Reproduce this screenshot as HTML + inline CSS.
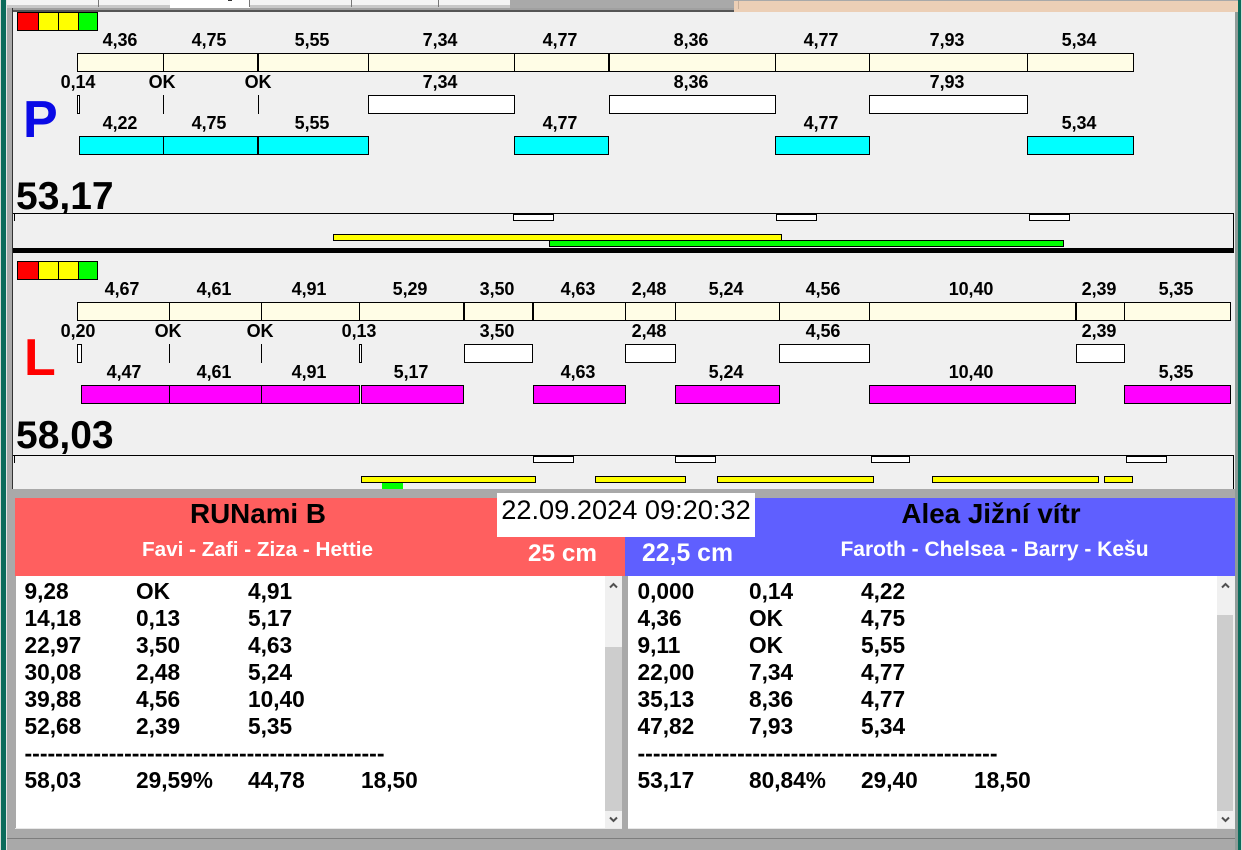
<!DOCTYPE html>
<html><head><meta charset="utf-8">
<style>
html,body{margin:0;padding:0;width:1242px;height:850px;overflow:hidden;background:#a9a9a9}
body{position:relative;font-family:"Liberation Sans",Arial,sans-serif;color:#000}
div{position:absolute;box-sizing:border-box}
svg{position:absolute}
.b{border:1px solid #000}
.a{height:19px;top:53px;background:#fffde6}
.c{height:19px;top:95px;background:#fff}
.d{height:19px;top:136px;background:#00ffff}
.e{height:19px;top:302px;background:#fffde6}
.f{height:19px;top:344px;background:#fff}
.g{height:19px;top:385px;background:#ff00ff}
.tk{width:1px;background:#000;height:19px}
.t{width:100px;text-align:center;font-weight:bold;font-size:18px;line-height:20px;height:20px;white-space:nowrap;letter-spacing:-.1px}
.big{font-weight:bold;font-size:39px;line-height:44px;left:16px;white-space:nowrap}
.w{background:#fff;height:7px}
.y{background:#ffff00;height:7px}
.gr{background:#00ff00;border:1px solid #000}
.col{font-weight:bold;font-size:22.7px;line-height:27px;top:578px;white-space:pre}
.col span{font-size:23px}
.sb{background:#f0f0f0;top:576px;height:252px;width:17px}
.th{background:#cdcdcd;width:17px}
.h{text-align:center;white-space:nowrap;font-weight:bold}
</style></head><body>

<!-- window frame -->
<div style="left:0;top:0;width:1px;height:850px;background:#d8dcd8"></div>
<div style="left:1px;top:0;width:5px;height:850px;background:#0b6b5b"></div>
<div style="left:6px;top:0;width:1px;height:850px;background:#e6e6e6"></div>
<div style="left:7px;top:0;width:5px;height:850px;background:#a9a9a9"></div>
<div style="left:1238px;top:0;width:3px;height:850px;background:#0b6b5b"></div>
<div style="left:1241px;top:0;width:1px;height:850px;background:#d8dcd8"></div>
<div style="left:1235px;top:12px;width:3px;height:838px;background:#8f9b98"></div>

<!-- top tabs -->
<div style="left:7px;top:0;width:503px;height:8px;background:#f4f4f4"></div>
<div style="left:7px;top:5px;width:503px;height:3px;background:#c8c8c8"></div>
<div style="left:170px;top:0;width:80px;height:8px;background:#fff"></div>
<div style="left:98px;top:0;width:1px;height:7px;background:#777"></div>
<div style="left:249px;top:0;width:1px;height:7px;background:#777"></div>
<div style="left:351px;top:0;width:1px;height:7px;background:#777"></div>
<div style="left:438px;top:0;width:1px;height:7px;background:#777"></div>
<div style="left:228px;top:0;width:4px;height:1px;background:#333"></div>
<div style="left:510px;top:1px;width:224px;height:7px;background:#a9a9a9"></div>
<div style="left:12px;top:8px;width:722px;height:2px;background:#a0a0a0"></div>
<div style="left:12px;top:10px;width:722px;height:2px;background:#555"></div>
<div style="left:734px;top:1px;width:504px;height:11px;background:#eccfb6"></div>
<div style="left:738px;top:1px;width:1px;height:8px;background:#c9b09a"></div>

<!-- panel -->
<div style="left:12px;top:8px;width:1px;height:481px;background:#333"></div>
<div style="left:13px;top:12px;width:1222px;height:477px;background:#f0f0f0"></div>

<!-- P semaphore -->
<div class="b" style="left:17px;top:12px;width:22px;height:19px;background:#ff0000"></div>
<div class="b" style="left:38px;top:12px;width:21px;height:19px;background:#ffff00"></div>
<div class="b" style="left:58px;top:12px;width:21px;height:19px;background:#ffff00"></div>
<div class="b" style="left:78px;top:12px;width:20px;height:19px;background:#00ff00"></div>

<!-- P row 1 -->
<div class="b a" style="left:77px;width:87px"></div>
<div class="b a" style="left:163px;width:95px"></div>
<div class="b a" style="left:258px;width:111px"></div>
<div class="b a" style="left:368px;width:147px"></div>
<div class="b a" style="left:514px;width:95px"></div>
<div class="b a" style="left:609px;width:167px"></div>
<div class="b a" style="left:775px;width:95px"></div>
<div class="b a" style="left:869px;width:159px"></div>
<div class="b a" style="left:1027px;width:107px"></div>

<!-- P row 2 -->
<div class="b c" style="left:77px;width:3px"></div>
<div class="tk" style="left:163px;top:95px"></div>
<div class="tk" style="left:258px;top:95px"></div>
<div class="b c" style="left:368px;width:147px"></div>
<div class="b c" style="left:609px;width:167px"></div>
<div class="b c" style="left:869px;width:159px"></div>

<!-- P row 3 -->
<div class="b d" style="left:79px;width:85px"></div>
<div class="b d" style="left:163px;width:95px"></div>
<div class="b d" style="left:258px;width:111px"></div>
<div class="b d" style="left:514px;width:95px"></div>
<div class="b d" style="left:775px;width:95px"></div>
<div class="b d" style="left:1027px;width:107px"></div>

<!-- P labels -->
<div class="t" style="left:70px;top:30px">4,36</div>
<div class="t" style="left:159px;top:30px">4,75</div>
<div class="t" style="left:262px;top:30px">5,55</div>
<div class="t" style="left:390px;top:30px">7,34</div>
<div class="t" style="left:510px;top:30px">4,77</div>
<div class="t" style="left:641px;top:30px">8,36</div>
<div class="t" style="left:771px;top:30px">4,77</div>
<div class="t" style="left:897px;top:30px">7,93</div>
<div class="t" style="left:1029px;top:30px">5,34</div>

<div class="t" style="left:28px;top:72px">0,14</div>
<div class="t" style="left:112px;top:72px">OK</div>
<div class="t" style="left:208px;top:72px">OK</div>
<div class="t" style="left:390px;top:72px">7,34</div>
<div class="t" style="left:641px;top:72px">8,36</div>
<div class="t" style="left:897px;top:72px">7,93</div>

<div class="t" style="left:70px;top:113px">4,22</div>
<div class="t" style="left:159px;top:113px">4,75</div>
<div class="t" style="left:262px;top:113px">5,55</div>
<div class="t" style="left:510px;top:113px">4,77</div>
<div class="t" style="left:771px;top:113px">4,77</div>
<div class="t" style="left:1029px;top:113px">5,34</div>

<div style="left:23px;top:90px;font-weight:bold;font-size:52px;line-height:60px;color:#0a0ae6">P</div>

<!-- P total, clipped by line -->
<div style="left:13px;top:170px;width:200px;height:43px;overflow:hidden"><div class="big" style="left:3px;top:5px">53,17</div></div>

<!-- P timeline -->
<div style="left:13px;top:213px;width:1221px;height:1px;background:#000"></div>
<div style="left:14px;top:214px;width:1px;height:7px;background:#000"></div>
<div style="left:1233px;top:213px;width:1px;height:35px;background:#000"></div>
<div class="b w" style="left:513px;top:214px;width:41px"></div>
<div class="b w" style="left:776px;top:214px;width:41px"></div>
<div class="b w" style="left:1029px;top:214px;width:41px"></div>
<div class="b y" style="left:333px;top:234px;width:449px"></div>
<div class="gr" style="left:549px;top:240px;width:515px;height:7px"></div>
<div style="left:13px;top:248px;width:1221px;height:5px;background:#000"></div>

<!-- L semaphore -->
<div class="b" style="left:17px;top:261px;width:22px;height:19px;background:#ff0000"></div>
<div class="b" style="left:38px;top:261px;width:21px;height:19px;background:#ffff00"></div>
<div class="b" style="left:58px;top:261px;width:21px;height:19px;background:#ffff00"></div>
<div class="b" style="left:78px;top:261px;width:20px;height:19px;background:#00ff00"></div>

<!-- L row 1 -->
<div class="b e" style="left:77px;width:93px"></div>
<div class="b e" style="left:169px;width:93px"></div>
<div class="b e" style="left:261px;width:99px"></div>
<div class="b e" style="left:359px;width:105px"></div>
<div class="b e" style="left:464px;width:69px"></div>
<div class="b e" style="left:533px;width:93px"></div>
<div class="b e" style="left:625px;width:51px"></div>
<div class="b e" style="left:675px;width:105px"></div>
<div class="b e" style="left:779px;width:91px"></div>
<div class="b e" style="left:869px;width:207px"></div>
<div class="b e" style="left:1076px;width:49px"></div>
<div class="b e" style="left:1124px;width:107px"></div>

<!-- L row 2 -->
<div class="b f" style="left:77px;width:5px"></div>
<div class="tk" style="left:169px;top:344px"></div>
<div class="tk" style="left:261px;top:344px"></div>
<div class="b f" style="left:359px;width:3px"></div>
<div class="b f" style="left:464px;width:69px"></div>
<div class="b f" style="left:625px;width:51px"></div>
<div class="b f" style="left:779px;width:91px"></div>
<div class="b f" style="left:1076px;width:49px"></div>

<!-- L row 3 -->
<div class="b g" style="left:81px;width:89px"></div>
<div class="b g" style="left:169px;width:93px"></div>
<div class="b g" style="left:261px;width:99px"></div>
<div class="b g" style="left:361px;width:103px"></div>
<div class="b g" style="left:533px;width:93px"></div>
<div class="b g" style="left:675px;width:105px"></div>
<div class="b g" style="left:869px;width:207px"></div>
<div class="b g" style="left:1124px;width:107px"></div>

<!-- L labels -->
<div class="t" style="left:72px;top:279px">4,67</div>
<div class="t" style="left:164px;top:279px">4,61</div>
<div class="t" style="left:259px;top:279px">4,91</div>
<div class="t" style="left:360px;top:279px">5,29</div>
<div class="t" style="left:447px;top:279px">3,50</div>
<div class="t" style="left:528px;top:279px">4,63</div>
<div class="t" style="left:599px;top:279px">2,48</div>
<div class="t" style="left:676px;top:279px">5,24</div>
<div class="t" style="left:773px;top:279px">4,56</div>
<div class="t" style="left:921px;top:279px">10,40</div>
<div class="t" style="left:1049px;top:279px">2,39</div>
<div class="t" style="left:1126px;top:279px">5,35</div>

<div class="t" style="left:28px;top:321px">0,20</div>
<div class="t" style="left:118px;top:321px">OK</div>
<div class="t" style="left:210px;top:321px">OK</div>
<div class="t" style="left:309px;top:321px">0,13</div>
<div class="t" style="left:447px;top:321px">3,50</div>
<div class="t" style="left:599px;top:321px">2,48</div>
<div class="t" style="left:773px;top:321px">4,56</div>
<div class="t" style="left:1049px;top:321px">2,39</div>

<div class="t" style="left:74px;top:362px">4,47</div>
<div class="t" style="left:164px;top:362px">4,61</div>
<div class="t" style="left:259px;top:362px">4,91</div>
<div class="t" style="left:361px;top:362px">5,17</div>
<div class="t" style="left:528px;top:362px">4,63</div>
<div class="t" style="left:676px;top:362px">5,24</div>
<div class="t" style="left:921px;top:362px">10,40</div>
<div class="t" style="left:1126px;top:362px">5,35</div>

<div style="left:24px;top:328px;font-weight:bold;font-size:52px;line-height:60px;color:#ff0000">L</div>

<div class="big" style="top:414px">58,03</div>

<!-- L timeline -->
<div style="left:13px;top:455px;width:1221px;height:1px;background:#000"></div>
<div style="left:14px;top:456px;width:1px;height:7px;background:#000"></div>
<div style="left:1233px;top:455px;width:1px;height:34px;background:#000"></div>
<div class="b w" style="left:533px;top:456px;width:41px"></div>
<div class="b w" style="left:675px;top:456px;width:41px"></div>
<div class="b w" style="left:871px;top:456px;width:39px"></div>
<div class="b w" style="left:1126px;top:456px;width:41px"></div>
<div class="b y" style="left:361px;top:476px;width:175px"></div>
<div class="b y" style="left:595px;top:476px;width:91px"></div>
<div class="b y" style="left:717px;top:476px;width:157px"></div>
<div class="b y" style="left:932px;top:476px;width:167px"></div>
<div class="b y" style="left:1104px;top:476px;width:29px"></div>
<div style="left:382px;top:483px;width:21px;height:6px;background:#00ff00"></div>

<!-- Gray band -->
<div style="left:12px;top:489px;width:1223px;height:9px;background:#a9a9a9"></div>

<!-- Headers -->
<div style="left:15px;top:498px;width:610px;height:78px;background:#ff5f5f"></div>
<div style="left:625px;top:498px;width:610px;height:78px;background:#5f5fff"></div>

<div class="h" style="left:108px;top:498px;width:300px;font-size:27.8px;line-height:32px">RUNami B</div>
<div class="h" style="left:841px;top:498px;width:300px;font-size:27.8px;line-height:32px">Alea Jižní vítr</div>
<div class="h" style="left:57.5px;top:539px;width:400px;font-size:20.7px;line-height:22px;color:#fff">Favi - Zafi - Ziza - Hettie</div>
<div class="h" style="left:794.5px;top:539px;width:400px;font-size:21px;line-height:22px;color:#fff">Faroth - Chelsea - Barry - Kešu</div>
<div class="h" style="left:512.5px;top:540px;width:100px;font-size:24.3px;line-height:28px;color:#fff">25 cm</div>
<div class="h" style="left:637.5px;top:540px;width:100px;font-size:24.8px;line-height:28px;color:#fff">22,5 cm</div>

<div style="left:497px;top:493px;width:258px;height:44px;background:#fff"></div>
<div style="left:497px;top:493px;width:258px;text-align:center;font-size:27.2px;line-height:34px;white-space:nowrap">22.09.2024 09:20:32</div>

<!-- Lists -->
<div style="left:16px;top:576px;width:606px;height:252px;background:#fff"></div>
<div style="left:628px;top:576px;width:605px;height:252px;background:#fff"></div>
<div style="left:15px;top:828px;width:607px;height:1px;background:#e8e8e8"></div>
<div style="left:628px;top:828px;width:607px;height:1px;background:#e8e8e8"></div>
<div style="left:622px;top:576px;width:6px;height:253px;background:#a9a9a9"></div>
<div style="left:1233px;top:576px;width:2px;height:253px;background:#f0f0f0"></div>

<div class="sb" style="left:605px"></div>
<div class="th" style="left:605px;top:647px;height:164px"></div>
<svg style="left:608px;top:581px" width="11" height="9"><path d="M2 6.5 L5.5 3 L9 6.5" fill="none" stroke="#505050" stroke-width="2"/></svg>
<svg style="left:608px;top:815px" width="11" height="9"><path d="M2 2.5 L5.5 6 L9 2.5" fill="none" stroke="#505050" stroke-width="2"/></svg>

<div class="sb" style="left:1217px;width:16px"></div>
<div class="th" style="left:1217px;top:615px;height:196px;width:16px"></div>
<svg style="left:1220px;top:581px" width="11" height="9"><path d="M2 6.5 L5.5 3 L9 6.5" fill="none" stroke="#505050" stroke-width="2"/></svg>
<svg style="left:1220px;top:815px" width="11" height="9"><path d="M2 2.5 L5.5 6 L9 2.5" fill="none" stroke="#505050" stroke-width="2"/></svg>

<div class="col" style="left:24.5px">9,28
14,18
22,97
30,08
39,88
52,68
<span>-----------------------------------------------</span>
58,03</div>
<div class="col" style="left:136px">OK
0,13
3,50
2,48
4,56
2,39

29,59%</div>
<div class="col" style="left:248px">4,91
5,17
4,63
5,24
10,40
5,35

44,78</div>
<div class="col" style="left:361px;top:767px">18,50</div>

<div class="col" style="left:637.5px">0,000
4,36
9,11
22,00
35,13
47,82
<span>-----------------------------------------------</span>
53,17</div>
<div class="col" style="left:749px">0,14
OK
OK
7,34
8,36
7,93

80,84%</div>
<div class="col" style="left:861px">4,22
4,75
5,55
4,77
4,77
5,34

29,40</div>
<div class="col" style="left:974px;top:767px">18,50</div>

<!-- Bottom -->
<div style="left:7px;top:829px;width:1228px;height:21px;background:#a9a9a9"></div>
<div style="left:7px;top:838px;width:1228px;height:1px;background:#7d7d7d"></div>
</body></html>
